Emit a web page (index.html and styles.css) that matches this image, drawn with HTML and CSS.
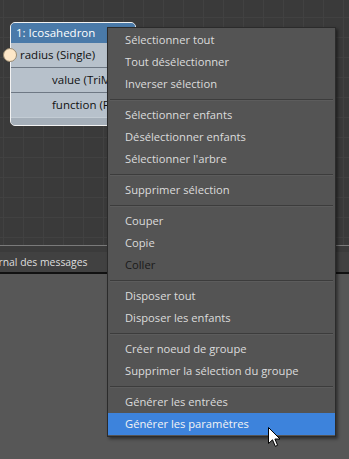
FILE: index.html
```html
<!DOCTYPE html>
<html lang="fr">
<head>
    <meta charset="UTF-8">
    <meta name="viewport" content="width=device-width, initial-scale=1.0">
    <title>Editeur de noeuds</title>
    <link rel="stylesheet" href="styles.css">
</head>
<body>

    <div class="workspace">
        <div class="canvas">
            <!-- node on the graph canvas -->
            <div class="node">
                <div class="node-title">1: Icosahedron</div>
                <div class="node-row input">
                    <span class="port"></span>
                    radius (Single)
                </div>
                <div class="node-row output">value (TriMesh)</div>
                <div class="node-row output last">function (Func)</div>
                <div class="node-footer"></div>
            </div>
        </div>

        <div class="panel">
            <div class="panel-gap"></div>
            <div class="tabs">
                <div class="tab">Journal des messages</div>
            </div>
            <div class="panel-body"></div>
        </div>
    </div>

    <div class="context-menu">
        <div class="menu-item">Sélectionner tout</div>
        <div class="menu-item">Tout désélectionner</div>
        <div class="menu-item">Inverser sélection</div>
        <div class="menu-sep"></div>
        <div class="menu-item">Sélectionner enfants</div>
        <div class="menu-item">Désélectionner enfants</div>
        <div class="menu-item">Sélectionner l'arbre</div>
        <div class="menu-sep"></div>
        <div class="menu-item">Supprimer sélection</div>
        <div class="menu-sep"></div>
        <div class="menu-item">Couper</div>
        <div class="menu-item">Copie</div>
        <div class="menu-item disabled">Coller</div>
        <div class="menu-sep"></div>
        <div class="menu-item">Disposer tout</div>
        <div class="menu-item">Disposer les enfants</div>
        <div class="menu-sep"></div>
        <div class="menu-item">Créer noeud de groupe</div>
        <div class="menu-item">Supprimer la sélection du groupe</div>
        <div class="menu-sep"></div>
        <div class="menu-item">Générer les entrées</div>
        <div class="menu-item active">Générer les paramètres</div>
    </div>

    <!-- mouse pointer -->
    <svg class="cursor" width="14" height="21" viewBox="0 0 14 21">
        <path d="M0.5 0.5 L0.5 16.5 L4.5 12.8 L7.3 19.3 L9.6 18.3 L6.9 12 L12 12 Z" fill="#fff" stroke="#000" stroke-width="1" stroke-linejoin="miter"/>
    </svg>

</body>
</html>
```

FILE: styles.css
```css
:root {
    --canvasColour: #3a3a3a;
    --gridColour: #414141;
    --panelColour: #575757;
    --menuColour: #545454;
    --highlightColour: #3d83dc;
}

body {
    margin: 0;
    width: 349px;
    height: 459px;
    overflow: hidden;
    font-family: 'Open Sans', 'Liberation Sans', sans-serif;
    font-size: 11.2px;
    background: var(--panelColour);
    position: relative;
}

.workspace {
    display: flex;
    flex-direction: column;
    height: 459px;
}

/* Graph canvas */
.canvas {
    position: relative;
    height: 245px;
    flex: none;
    background-color: var(--canvasColour);
    background-image:
        linear-gradient(to right, var(--gridColour) 1px, transparent 1px),
        linear-gradient(to bottom, var(--gridColour) 1px, transparent 1px);
    background-size: 20px 20px;
    background-position: 3px 17px;
}

.node {
    position: absolute;
    left: 10px;
    top: 22px;
    width: 124px;
    border: 1px solid #f2f2f2;
    border-radius: 5px;
    background: #b7c1cb;
    color: #111;
    font-size: 11.5px;
}

.node-title {
    height: 20px;
    line-height: 20px;
    padding-left: 5px;
    background: #4a7aa9;
    color: #fff;
    border-radius: 4px 4px 0 0;
}

.node-row {
    position: relative;
    height: 24px;
    line-height: 24px;
    border-bottom: 1px solid #6e7884;
    white-space: nowrap;
    overflow: hidden;
}

.node-row.input {
    overflow: visible;
    padding-left: 9px;
}

.node-row.output {
    padding-left: 41px;
}

.node-row.last {
    border-bottom: none;
}

.port {
    position: absolute;
    left: -8px;
    top: 5px;
    width: 12px;
    height: 12px;
    border-radius: 50%;
    background: #fde7c8;
    border: 1px solid #9a8a70;
}

.node-footer {
    height: 7px;
    border-top: 1px solid #c3ccd4;
    background: #a5afb9;
    border-radius: 0 0 4px 4px;
}

/* Bottom panel */
.panel {
    flex: 1;
    display: flex;
    flex-direction: column;
    border-top: 1px solid #7a7a7a;
}

.panel-gap {
    height: 6px;
    background: #3b3b3b;
}

.tabs {
    height: 20px;
    background: #414141;
    border-bottom: 2px solid #111;
    overflow: hidden;
}

.tab {
    margin-left: -17px;
    font-size: 10.4px;
    line-height: 21px;
    color: #dedede;
    white-space: nowrap;
}

.panel-body {
    flex: 1;
    background: var(--panelColour);
}

/* Context menu */
.context-menu {
    position: absolute;
    left: 107px;
    top: 27px;
    width: 227px;
    padding: 1px 0;
    background: var(--menuColour);
    border: 1px solid #2b2b2b;
    box-shadow: 2px 2px 3px rgba(0, 0, 0, 0.45);
}

.menu-item {
    height: 22px;
    line-height: 22px;
    padding-left: 17px;
    color: #dcdcdc;
    white-space: nowrap;
}

.menu-item.disabled {
    color: #1a1a1a;
}

.menu-item.active {
    background: var(--highlightColour);
    color: #f4f4f4;
}

.menu-sep {
    height: 9px;
    margin: 0 2px 0 2px;
    display: flex;
    flex-direction: column;
    justify-content: center;
}

.menu-sep::before {
    content: "";
    display: block;
    height: 1px;
    background: #3c3c3c;
    border-bottom: 1px solid #5c5c5c;
}

.cursor {
    position: absolute;
    left: 268px;
    top: 427px;
}
```
